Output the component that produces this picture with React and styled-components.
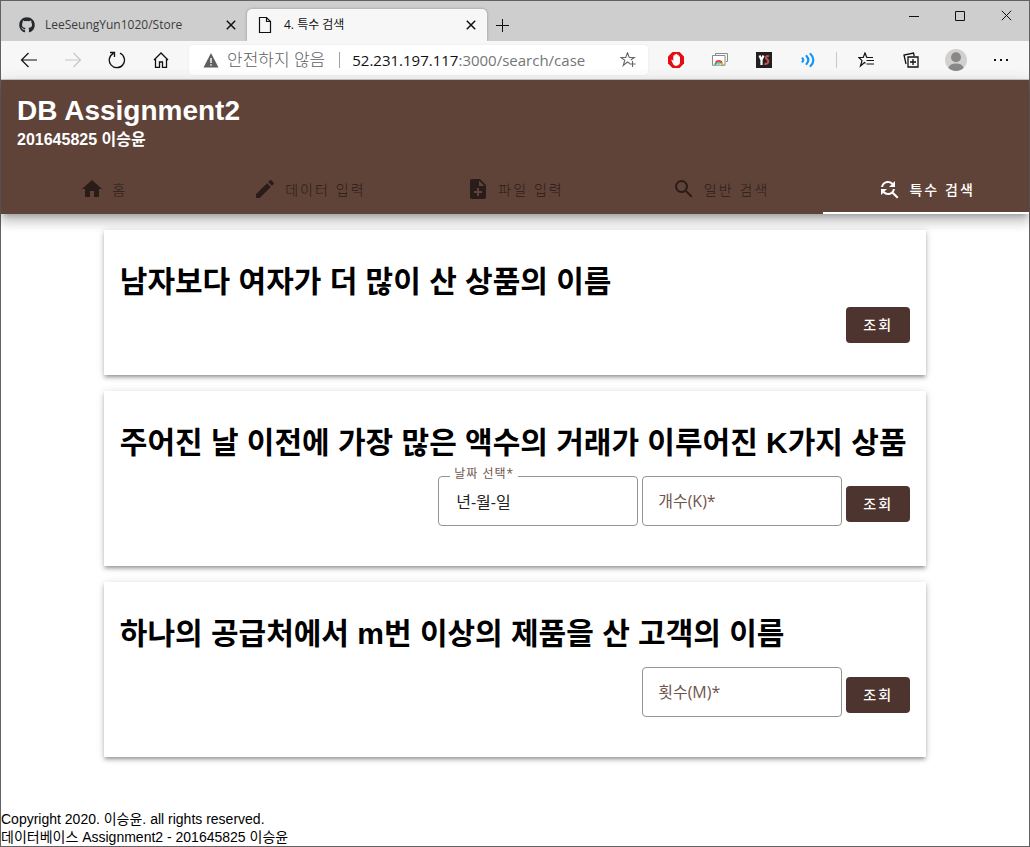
import React from "react";
import styled, { createGlobalStyle } from "styled-components";
import { FaGithub } from "react-icons/fa";
import { MdHome, MdEdit, MdNoteAdd, MdSearch, MdFindReplace } from "react-icons/md";

const uiFont = `"Open Sans", "Noto Sans CJK KR", sans-serif`;
const pageFont = `"Liberation Sans", "Noto Sans CJK KR", sans-serif`;

const GlobalStyle = createGlobalStyle`
  * { box-sizing: border-box; }
  body { margin: 0; background: #fff; }
  button, input { font: inherit; }
  svg { display: block; flex: none; }
`;

const Window = styled.div`
  min-height: 100vh;
  display: flex;
  flex-direction: column;
  border: 1px solid #626262;
  background: #fff;
  font-family: ${pageFont};
`;

const TabStrip = styled.div`
  height: 40px;
  display: flex;
  align-items: flex-end;
  background: #cecece;
  font-family: ${uiFont};
`;

const BrowserTab = styled.div`
  width: ${(p) => (p.$active ? 240 : 246)}px;
  height: 32px;
  display: flex;
  align-items: center;
  gap: 10px;
  padding: 0 8px 0 ${(p) => (p.$active ? 9 : 18)}px;
  border-radius: 5px 5px 0 0;
  background: ${(p) => (p.$active ? "#f7f7f7" : "transparent")};
  box-shadow: ${(p) => (p.$active ? "0 0 3px rgba(0, 0, 0, 0.3)" : "none")};
  clip-path: inset(-4px -4px 0 -4px);
  color: ${(p) => (p.$active ? "#111" : "#3c3c3c")};
  font-size: 12px;
  line-height: 16px;
`;

const TabTitle = styled.span`
  flex: 1;
  white-space: nowrap;
`;

const PlainButton = styled.button`
  display: flex;
  align-items: center;
  justify-content: center;
  padding: 0;
  border: 0;
  background: transparent;
  color: ${(p) => (p.disabled ? "#c6c6c6" : "#111")};
`;

const TabButton = styled(PlainButton)`
  width: 16px;
  height: 16px;
`;

const NewTabButton = styled(PlainButton)`
  width: 30px;
  height: 32px;
`;

const WindowControls = styled.div`
  align-self: flex-start;
  display: flex;
  margin-left: auto;
`;

const ControlButton = styled(PlainButton)`
  width: 46px;
  height: 29px;
`;

const Toolbar = styled.div`
  height: 39px;
  display: flex;
  align-items: center;
  gap: 6px;
  padding: 0 6px;
  background: #f7f7f7;
  border-bottom: 1px solid #c8c8c8;
  font-family: ${uiFont};
`;

const ToolGroup = styled.div`
  display: flex;
`;

const ToolButton = styled(PlainButton)`
  width: ${(p) => (p.$wide ? 45 : 44)}px;
  height: 36px;
`;

const AddressBar = styled.div`
  flex: 1;
  min-width: 0;
  height: 30px;
  display: flex;
  align-items: center;
  padding: 0 12px 0 14px;
  border-radius: 4px;
  background: #fff;
  box-shadow: 0 0 2px rgba(0, 0, 0, 0.08);
  color: #757575;
  font-size: 15px;
  line-height: 20px;
  white-space: nowrap;
`;

const Security = styled.span`
  display: flex;
  align-items: center;
  gap: 8px;
  font-size: 17px;
  font-weight: 300;
  color: #5f5f5f;
`;

const Divider = styled.span`
  width: 1px;
  height: 16px;
  margin: 0 12px 0 14px;
  background: #a0a0a0;
`;

const ToolDivider = styled(Divider)`
  margin: 0;
  background: #c8c8c8;
`;

const Url = styled.span`
  flex: 1;
  min-width: 0;
  overflow: hidden;
`;

const Host = styled.span`
  color: #111;
`;

const Header = styled.header`
  padding-top: 13px;
  background: #5f4338;
  color: #fff;
  box-shadow: 0 5px 5px -3px rgba(0, 0, 0, 0.2), 0 8px 10px 1px rgba(0, 0, 0, 0.14),
    0 3px 14px 2px rgba(0, 0, 0, 0.12);
`;

const Brand = styled.div`
  padding: 0 16px 15px;
`;

const SiteTitle = styled.h1`
  margin: 0;
  font-size: 28px;
  line-height: 36px;
`;

const StudentName = styled.p`
  margin: 0;
  font-size: 16px;
  font-weight: 700;
  line-height: 22px;
`;

const Nav = styled.nav`
  display: flex;
`;

const NavLink = styled.a`
  flex: 1;
  height: 48px;
  display: flex;
  align-items: center;
  justify-content: center;
  gap: 8px;
  border-bottom: 2px solid ${(p) => (p.$active ? "#fff" : "transparent")};
  color: ${(p) => (p.$active ? "#fff" : "#2a1c18")};
  font-size: 14px;
  font-weight: ${(p) => (p.$active ? 500 : 300)};
  letter-spacing: 2px;
  text-decoration: none;
  white-space: nowrap;
`;

const Main = styled.main`
  flex: 1;
  display: flex;
  flex-direction: column;
  gap: 16px;
  width: 80%;
  margin: 16px auto 0;
`;

const Card = styled.section`
  position: relative;
  padding: 32px 16px;
  background: #fff;
  box-shadow: 0 3px 3px -2px rgba(0, 0, 0, 0.2), 0 3px 4px rgba(0, 0, 0, 0.2),
    0 1px 8px rgba(0, 0, 0, 0.14);
`;

const CardTitle = styled.h2`
  margin: 0 0 6px;
  color: #000;
  font-size: 30px;
  line-height: 39px;
  white-space: nowrap;
`;

const QueryForm = styled.form`
  display: flex;
  align-items: center;
  justify-content: flex-end;
  gap: 4px;
`;

const Field = styled.div`
  position: relative;
  width: 200px;
  margin: 8px 0;
`;

const FieldInput = styled.input`
  width: 100%;
  height: 50px;
  padding: 0 17px;
  border: 1px solid #949494;
  border-radius: 4px;
  background: transparent;
  color: #222;
  font-family: ${uiFont};
  font-size: 16px;
  font-weight: 400;
`;

const FieldLabel = styled.label`
  position: absolute;
  left: ${(p) => (p.$floating ? 12 : 16)}px;
  top: ${(p) => (p.$floating ? -12 : 15)}px;
  padding: 0 ${(p) => (p.$floating ? 4 : 0)}px;
  background: #fff;
  color: #6f554d;
  font-family: ${uiFont};
  font-size: ${(p) => (p.$floating ? 12 : 16)}px;
  font-weight: 400;
  letter-spacing: ${(p) => (p.$floating ? 1 : 0)}px;
  line-height: 20px;
  pointer-events: none;
`;

const SubmitButton = styled.button`
  width: 64px;
  height: 36px;
  margin-top: ${(p) => (p.$besideField ? 6 : 0)}px;
  padding: 0 0 2px;
  border: 0;
  border-radius: 4px;
  background: #4e342e;
  color: #fff;
  font-size: 14px;
  font-weight: 500;
  letter-spacing: 2px;
`;

const Footer = styled.footer`
  color: #000;
  font-size: 14px;
  line-height: 18px;
`;

const Icon = ({ size = 16, children, ...rest }) => (
  <svg width={size} height={size} viewBox={`0 0 ${size} ${size}`} fill="none" stroke="currentColor" aria-hidden="true" {...rest}>
    {children}
  </svg>
);

const CloseIcon = ({ size = 10, width = 1.5 }) => (
  <Icon size={size} strokeWidth={width}>
    <path d={`M.8 .8 ${size - 0.8} ${size - 0.8}M${size - 0.8} .8 .8 ${size - 0.8}`} />
  </Icon>
);

const PageIcon = () => (
  <Icon size={18} strokeWidth="1.2">
    <path d="M3.5 1.5h7l4 4v11h-11zM10.5 1.5v4h4" />
  </Icon>
);

const ArrowIcon = ({ forward }) => (
  <Icon size={18} strokeWidth="1.2">
    <path d={forward ? "M1 9h15.500M9.500 2l7 7-7 7" : "M17 9H1.500M8.500 2l-7 7 7 7"} />
  </Icon>
);

const ReloadIcon = () => (
  <Icon size={18} strokeWidth="1.3">
    <path d="M12 2.200A7.600 7.600 0 1 1 5.500 2.300M2 1.500h4.500V6" />
  </Icon>
);

const HomeIcon = () => (
  <Icon strokeWidth="1.3">
    <path d="M1 8 8 1l7 7M2.500 7v8.300h4V10h3v5.300h4V7" />
  </Icon>
);

const WarningIcon = () => (
  <Icon stroke="none">
    <path d="M8 1 15.500 15.500H.5z" fill="#5f5f5f" />
    <path d="M7.300 6h1.400v5H7.300zM7.300 12.300h1.400v1.400H7.300z" fill="#fff" />
  </Icon>
);

const AddFavoriteIcon = () => (
  <Icon stroke="#666" strokeWidth="1.1">
    <path d="M9.800 11.500 7.500 10l-4.300 3.500 1.600-5.200L.8 5.500h4.900L7.500.8l1.800 4.700h4.900L10.800 8M12.500 9v6M9.500 12h6" />
  </Icon>
);

const BlockerIcon = () => (
  <Icon size={18} stroke="none">
    <path d="M5.500 1h7L17 5.500v7L12.500 17h-7L1 12.500v-7z" fill="#e60d12" />
    <path d="M4.300 9c.8-.5 1.500.2 2 1.200V5c0-.9 1.200-.9 1.200 0V3.800c0-.9 1.400-.9 1.400 0V3.500c0-.9 1.400-.9 1.400 0v1c0-.9 1.400-.9 1.400 0V6c0-.9 1.300-.9 1.300 0v5c0 4.500-6 5-7.200 1.500z" fill="#fff" />
  </Icon>
);

const RemoteIcon = () => (
  <Icon stroke="#8a8a8a">
    <path d="M3.500 3V1.500h12v8H14" />
    <path d="M.5 3.500h12.500v9.800H.5z" fill="#fff" />
    <path d="M2 12.800a5 5 0 0 1 9.600 0z" fill="#31a853" stroke="none" />
    <path d="M2.600 10.300a5 5 0 0 1 8.400 0z" fill="#e94235" stroke="none" />
    <path d="M8.500 12.800 10.500 10l1.200 2.800z" fill="#fbbc05" stroke="none" />
    <path d="M4.800 12.800a2 2 0 0 1 4 0z" fill="#4285f4" stroke="#fff" strokeWidth=".7" />
  </Icon>
);

const StopIcon = () => (
  <Icon strokeWidth="2.200">
    <path d="M0 0h16v16H0z" fill="#202020" stroke="none" />
    <path d="M3.500 3.500 5.500 8l2-4.500M5.500 8v5" stroke="#fff" />
    <path d="M13 4.500c-1.500-1-3.500 0-3 1.500s2.500 1.500 2.300 3.500S10 12.500 8.500 11.500" stroke="#c0504d" />
  </Icon>
);

const SoundIcon = () => (
  <Icon stroke="#1594f5" strokeWidth="2.200" strokeLinecap="round">
    <path d="M2.500 6.300c1 1 1 2.400 0 3.400M6.500 4c2.200 2.400 2.200 5.600 0 8M10.500 2c3.800 3.500 3.800 8.500 0 12" />
  </Icon>
);

const FavoritesIcon = () => (
  <Icon strokeWidth="1.2">
    <path d="M7.500 11.200 6.500 10.500l-4 3.500 1.500-5.300L.8 5.500h4.400L7 1l1.800 4.500H15M8.500 8.500H16M8.500 12H16" />
  </Icon>
);

const CollectionsIcon = () => (
  <Icon strokeWidth="1.3">
    <path d="M3 12 1 3l9.500-2 .7 3M5 5h10v10H5zM10 7v6M7 10h6" />
  </Icon>
);

const ProfileIcon = () => (
  <Icon size={22} stroke="none">
    <circle cx="11" cy="11" r="11" fill="#d2d0ce" />
    <circle cx="11" cy="8.300" r="5" fill="#8a8886" />
    <path d="M3.300 18.800a8 6 0 0 1 15.400 0 11 11 0 0 1-15.400 0z" fill="#8a8886" />
  </Icon>
);

const MoreIcon = () => (
  <Icon stroke="none" fill="currentColor">
    <path d="M1 7h2v2H1zM7 7h2v2H7zM13 7h2v2h-2z" />
  </Icon>
);

const navItems = [
  { label: "홈", icon: MdHome },
  { label: "데이터 입력", icon: MdEdit },
  { label: "파일 입력", icon: MdNoteAdd },
  { label: "일반 검색", icon: MdSearch },
  { label: "특수 검색", icon: MdFindReplace, active: true },
];

const queries = [
  { title: "남자보다 여자가 더 많이 산 상품의 이름", fields: [] },
  {
    title: "주어진 날 이전에 가장 많은 액수의 거래가 이루어진 K가지 상품",
    fields: [
      { id: "date", label: "날짜 선택*", value: "년-월-일" },
      { id: "count", label: "개수(K)*" },
    ],
  },
  {
    title: "하나의 공급처에서 m번 이상의 제품을 산 고객의 이름",
    fields: [{ id: "times", label: "횟수(M)*" }],
  },
];

const Browser = () => (
  <>
    <TabStrip>
      <BrowserTab>
        <FaGithub size={16} color="#24292e" />
        <TabTitle>LeeSeungYun1020/Store</TabTitle>
        <TabButton aria-label="Close LeeSeungYun1020/Store"><CloseIcon /></TabButton>
      </BrowserTab>
      <BrowserTab $active>
        <PageIcon />
        <TabTitle>4. 특수 검색</TabTitle>
        <TabButton aria-label="Close 4. 특수 검색"><CloseIcon /></TabButton>
      </BrowserTab>
      <NewTabButton aria-label="New tab"><Icon size={14}><path d="M7.500 1v13M1 7.500h13" /></Icon></NewTabButton>
      <WindowControls>
        <ControlButton aria-label="Minimize"><Icon size={12}><path d="M1 6.500h10" /></Icon></ControlButton>
        <ControlButton aria-label="Maximize"><Icon size={12}><path d="M1.500 1.500h9v9h-9z" /></Icon></ControlButton>
        <ControlButton aria-label="Close"><CloseIcon size={11} width={1} /></ControlButton>
      </WindowControls>
    </TabStrip>
    <Toolbar>
      <ToolGroup>
        <ToolButton aria-label="Back"><ArrowIcon /></ToolButton>
        <ToolButton aria-label="Forward" disabled><ArrowIcon forward /></ToolButton>
        <ToolButton aria-label="Reload"><ReloadIcon /></ToolButton>
        <ToolButton aria-label="Home"><HomeIcon /></ToolButton>
      </ToolGroup>
      <AddressBar>
        <Security><WarningIcon />안전하지 않음</Security>
        <Divider />
        <Url role="textbox" aria-label="Address" tabIndex={0}><Host>52.231.197.117</Host>:3000/search/case</Url>
        <TabButton aria-label="Add to favorites"><AddFavoriteIcon /></TabButton>
      </AddressBar>
      <ToolGroup>
        <ToolButton aria-label="Ad blocker"><BlockerIcon /></ToolButton>
        <ToolButton aria-label="Remote desktop"><RemoteIcon /></ToolButton>
        <ToolButton aria-label="Scripts"><StopIcon /></ToolButton>
        <ToolButton aria-label="Sound"><SoundIcon /></ToolButton>
      </ToolGroup>
      <ToolDivider />
      <ToolGroup>
        <ToolButton $wide aria-label="Favorites"><FavoritesIcon /></ToolButton>
        <ToolButton $wide aria-label="Collections"><CollectionsIcon /></ToolButton>
        <ToolButton $wide aria-label="Profile"><ProfileIcon /></ToolButton>
        <ToolButton $wide aria-label="Settings and more"><MoreIcon /></ToolButton>
      </ToolGroup>
    </Toolbar>
  </>
);

export default function App() {
  return (
    <Window>
      <GlobalStyle />
      <Browser />
      <Header>
        <Brand>
          <SiteTitle>DB Assignment2</SiteTitle>
          <StudentName>201645825 이승윤</StudentName>
        </Brand>
        <Nav>
          {navItems.map(({ label, icon: NavIcon, active }) => (
            <NavLink key={label} href="#" $active={active} aria-current={active ? "page" : undefined}>
              <NavIcon size={24} />
              {label}
            </NavLink>
          ))}
        </Nav>
      </Header>
      <Main>
        {queries.map(({ title, fields }) => (
          <Card key={title}>
            <CardTitle>{title}</CardTitle>
            <QueryForm onSubmit={(e) => e.preventDefault()}>
              {fields.map(({ id, label, value }) => (
                <Field key={id}>
                  <FieldInput id={id} defaultValue={value} />
                  <FieldLabel htmlFor={id} $floating={Boolean(value)}>{label}</FieldLabel>
                </Field>
              ))}
              <SubmitButton $besideField={fields.length > 0}>조회</SubmitButton>
            </QueryForm>
          </Card>
        ))}
      </Main>
      <Footer>
        <div>Copyright 2020. 이승윤. all rights reserved.</div>
        <div>데이터베이스 Assignment2 - 201645825 이승윤</div>
      </Footer>
    </Window>
  );
}
